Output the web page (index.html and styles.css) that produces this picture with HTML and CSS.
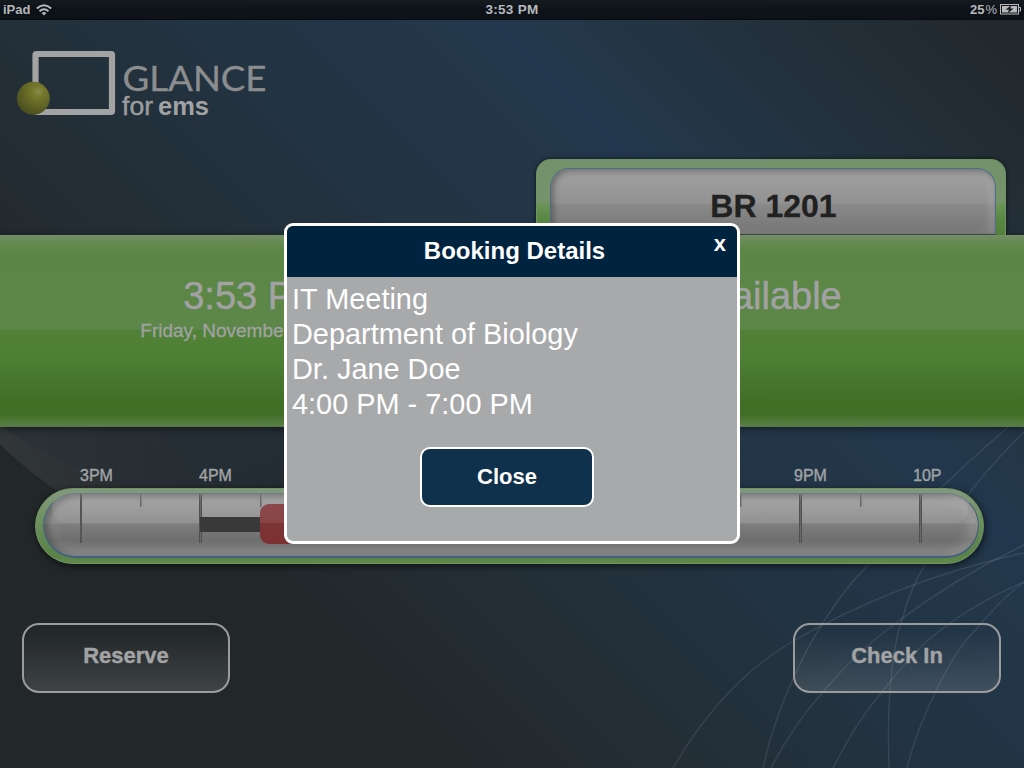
FILE: index.html
```html
<!DOCTYPE html>
<html lang="en">
<head>
<meta charset="utf-8">
<title>Glance for EMS</title>
<link rel="stylesheet" href="styles.css">
</head>
<body>
<div class="screen">
  <svg class="backdrop" viewBox="0 0 1024 768" aria-hidden="true">
    <defs>
      <linearGradient id="diagonal" gradientUnits="userSpaceOnUse" x1="0" y1="300" x2="625" y2="-325">
        <stop offset="0" stop-color="#22272a"/>
        <stop offset=".08" stop-color="#232b30"/>
        <stop offset=".24" stop-color="#23303a"/>
        <stop offset=".42" stop-color="#223444"/>
        <stop offset=".56" stop-color="#233749"/>
        <stop offset=".615" stop-color="#22374d"/>
        <stop offset=".68" stop-color="#233748"/>
        <stop offset=".83" stop-color="#23303b"/>
        <stop offset="1" stop-color="#22292e"/>
      </linearGradient>
      <linearGradient id="sweep" gradientUnits="userSpaceOnUse" x1="0" y1="0" x2="280" y2="0">
        <stop offset="0" stop-color="#fff" stop-opacity=".07"/>
        <stop offset="1" stop-color="#fff" stop-opacity="0"/>
      </linearGradient>
    </defs>
    <rect width="1024" height="768" fill="url(#diagonal)"/>
    <path d="M0 444Q30 474 60 492H300V427H0Z" fill="url(#sweep)"/>
    <path d="M3 427Q60 466 125 487H270Q290 480 300 474V427Z" fill="#23303a" opacity=".4"/>
    <g fill="none" stroke="#8e9ca8" stroke-opacity=".19" stroke-width="1.4">
      <path d="M673 768C715 696 760 660 795 640C865 600 945 570 1024 553"/>
      <path d="M763 768C772 726 784 700 794 677C804 654 812 640 823 623C840 596 850 584 868 565C900 525 940 487 1008 427"/>
      <path d="M771 768C788 735 804 713 823 692C846 664 870 642 897 622C940 590 980 566 1024 545"/>
      <path d="M833 768C850 735 863 714 882 692C905 662 925 640 950 623C974 606 998 593 1024 582"/>
      <path d="M889 768C888 730 888 710 890 692C892 663 895 640 902 620C908 597 914 582 925 565C950 512 990 465 1024 432"/>
      <path d="M907 768C915 737 924 715 935 693C948 666 960 645 978 627C993 609 1008 594 1024 582"/>
    </g>
  </svg>

  <header class="status">
    <div class="status-side">
      <span class="carrier">iPad</span>
      <svg class="wifi" width="16" height="12" viewBox="0 0 16 12"><g fill="none" stroke="#b4b8ba" stroke-width="1.9"><path d="M.8 4.5Q8-2.1 15.2 4.5"/><path d="M3.5 7.2Q8 3.1 12.5 7.2"/></g><path d="M5.6 9.1Q8 7 10.4 9.1L8 11.5Z" fill="#b4b8ba"/></svg>
    </div>
    <div class="status-time">3:53 PM</div>
    <div class="status-side status-right">
      <span class="percent">25<i>%</i></span>
      <svg width="21" height="11" viewBox="0 0 21 11"><rect x=".5" y=".5" width="18" height="9.5" fill="none" stroke="#b7b9ba"/><rect x="2" y="2" width="15" height="6.5" fill="#b7b9ba"/><path d="M19 3.5h1.5v3.5H19" fill="none" stroke="#b7b9ba"/><path d="M11.5 1L5.5 5.8H9L7.5 9.4L13.7 4.4H10.3Z" fill="#14181b"/></svg>
    </div>
  </header>

  <div class="top">
    <svg class="logo" width="256" height="72" viewBox="0 0 256 72" role="img" aria-label="Glance for ems">
      <defs><radialGradient id="ball" cx=".65" cy=".3" r=".68"><stop offset="0" stop-color="#898c4e"/><stop offset=".25" stop-color="#75782c"/><stop offset=".65" stop-color="#606524"/><stop offset="1" stop-color="#4d511f"/></radialGradient></defs>
      <rect x="19.5" y="6" width="76.5" height="58" rx="1" fill="none" stroke="#a3a3a3" stroke-width="6.2"/>
      <circle cx="17.3" cy="50.3" r="16.5" fill="url(#ball)"/>
      <text class="logo-name" x="106.5" y="43" textLength="144" lengthAdjust="spacingAndGlyphs">GLANCE</text>
      <text class="logo-for" x="106" y="67" textLength="31" lengthAdjust="spacingAndGlyphs">for</text>
      <text class="logo-ems" x="142" y="67" textLength="51" lengthAdjust="spacingAndGlyphs">ems</text>
    </svg>
    <div class="room"><div class="room-face">BR 1201</div></div>
  </div>

  <section class="banner">
    <div class="banner-col"><div class="big">3:53 PM</div><div class="date">Friday, November 18, 2011</div></div>
    <div class="banner-col state"><div class="big">Available</div></div>
  </section>

  <section class="schedule">
    <div class="hours"><span>3PM</span><span>4PM</span><span>5PM</span><span>6PM</span><span>7PM</span><span>8PM</span><span>9PM</span><span>10P</span></div>
    <div class="track">
      <div class="track-face">
        <div class="gloss"></div>
        <div class="ticks">
          <div class="tick thin"></div><div class="tick"></div><div class="tick"></div><div class="tick"></div><div class="tick"></div><div class="tick"></div><div class="tick"></div><div class="tick last"></div>
        </div>
        <div class="booking"><div class="lead"></div><div class="block"></div></div>
      </div>
    </div>
  </section>

  <nav class="actions"><button class="action">Reserve</button><button class="action">Check In</button></nav>

  <div class="dialog" role="dialog">
    <div class="dialog-head"><span>Booking Details</span><b class="dismiss">x</b></div>
    <div class="dialog-body">
      <div>IT Meeting</div><div>Department of Biology</div><div>Dr. Jane Doe</div><div>4:00 PM - 7:00 PM</div>
      <button class="close">Close</button>
    </div>
  </div>
</div>
</body>
</html>
```
FILE: styles.css
```css
* { box-sizing: border-box; }
body { margin: 0; font-family: "Liberation Sans", Arial, sans-serif; }
button { font-family: inherit; padding: 0; }

.screen { position: relative; width: 1024px; height: 768px; overflow: hidden; background: #22272b; display: flex; flex-direction: column; isolation: isolate; }
.backdrop { position: absolute; inset: 0; z-index: -1; }

.status { height: 20px; display: flex; justify-content: space-between; padding: 0 3px; background: linear-gradient(#131a20, #0c1117 60%, #0d1218); border-bottom: 1px solid #080c10; color: #b7babc; font-size: 13px; font-weight: bold; line-height: 19px; }
.status-side { width: 200px; display: flex; align-items: center; gap: 6px; }
.status-right { justify-content: flex-end; gap: 3px; }
.status-time { font-size: 13.5px; letter-spacing: .3px; }
.carrier { color: #b4b8ba; }
.percent i { font-style: normal; font-weight: normal; padding-left: 1px; }

.top { height: 215px; display: flex; justify-content: space-between; align-items: flex-start; padding: 28px 18px 0 16px; }
.logo-name { font-family: Lato, sans-serif; font-size: 34px; fill: #8b8d8f; stroke: #8b8d8f; stroke-width: .3px; }
.logo-for { font-size: 25px; fill: #9c9d9e; stroke: #9c9d9e; stroke-width: .4px; }
.logo-ems { font-size: 25px; font-weight: bold; fill: #a1a2a3; }

.room { width: 470px; height: 76px; margin-top: 111px; padding: 8px 9px 0 13px; border-radius: 15px 15px 0 0; border: 1px solid #6f9363; border-bottom: 0; background: linear-gradient(#73916a 0, #76946b 42px, #6d955a 43px, #568741 60px, #528139); box-shadow: 0 0 4px rgba(0,0,0,.65); clip-path: inset(-6px -6px 0 -6px); }
.room-face { height: 67px; border: 1px solid #4f6c88; border-bottom-color: #3e4550; border-radius: 19px 19px 0 0; background: linear-gradient(#a0a0a0, #929292 34px, #898989 36px, #757575); box-shadow: inset 2px 2px 6px rgba(0,0,0,.35), inset -5px 0 9px rgba(190,190,190,.35); color: #212121; font-size: 32px; font-weight: bold; line-height: 75px; text-align: center; padding-left: 1px; -webkit-text-stroke: .3px #212121; }

.banner { height: 192px; display: flex; padding-right: 5px; border-top: 1px solid #718f63; border-bottom: 1px solid #57754a; background: linear-gradient(#718e64 0, #65894f 8px, #5b8645 20px, #5c8748 93px, #518238 94px, #4c7e34 125px, #3f6e25 170px, #3f6e26 178px, #5a7e45 190px); color: #a2a1a4; text-align: center; box-shadow: 0 2px 8px rgba(0,0,0,.45); }
.banner-col { flex: 1; padding-top: 38px; }
.state { padding-left: 3px; }
.big { font-size: 38px; line-height: 44px; -webkit-text-stroke: .5px #a2a1a4; }
.date { font-size: 19px; line-height: 26px; -webkit-text-stroke: .3px #a2a1a4; }

.schedule { height: 137px; padding: 38px 40px 0 35px; }
.hours { display: grid; grid-template-columns: repeat(8, 119px); padding-left: 45px; height: 23px; color: #a0a2a4; font-size: 16px; line-height: 22px; -webkit-text-stroke: .4px #a0a2a4; }
.track { height: 76px; padding: 4px 4px 5px 7px; border-radius: 38px; border: 1px solid #6f9561; background: linear-gradient(#82987a 0, #82987a 5px, #6e9160 30px, #5a8148 65px, #5f8849); box-shadow: 1px 2px 6px 1px rgba(0,0,0,.5); }
.track-face { position: relative; height: 65px; overflow: hidden; border: 1px solid #416080; border-top-color: #6b7c8c; border-bottom-width: 2px; border-radius: 33px; background: linear-gradient(#979797, #8c8c8c 29px, #7e7e7e 30px, #6e6e6e 46px, #868686); box-shadow: inset 4px 1px 7px rgba(0,0,0,.4); }
.gloss { position: absolute; inset: 0 10px auto 8px; height: 29px; border-radius: 15px 20px 20px 20px; background: linear-gradient(rgba(255,255,255,.02), rgba(255,255,255,.13) 8px, rgba(255,255,255,.05)); }
.track-face::after { content: ""; position: absolute; inset: 0; border-radius: 32px; box-shadow: inset -9px 0 12px rgba(200,200,200,.25), inset 9px 0 12px rgba(180,180,180,.18); }
.ticks { position: absolute; inset: -1px auto auto 35px; display: flex; }
.tick { width: 120px; height: 50px; background: linear-gradient(#666, #666) 61px 0 / 1.5px 14px no-repeat, linear-gradient(90deg, #505050 1px, #686868 1px, #686868 2px, #505050 2px) 0 0 / 3px 50px no-repeat; }
.tick.thin { background: linear-gradient(#666, #666) 61px 0 / 1.5px 14px no-repeat, linear-gradient(#555, #555) 1px 0 / 2px 50px no-repeat; }
.tick.last { background: linear-gradient(90deg, #505050 1px, #686868 1px, #686868 2px, #505050 2px) 0 0 / 3px 50px no-repeat; }
.booking { position: absolute; inset: 10px auto auto 156px; display: flex; align-items: center; }
.lead { width: 60px; height: 15px; background: #393939; }
.block { width: 300px; height: 40px; border-radius: 9px; background: linear-gradient(#8b484a, #894345 19px, #7d3435 19px, #7b3031); }

.actions { display: flex; justify-content: space-between; padding: 59px 23px 0 22px; }
.action { width: 208px; height: 70px; border: 2px solid #9a9b9c; border-radius: 17px; background: linear-gradient(rgba(255,255,255,0) 10%, rgba(255,255,255,.13)); color: #a2a3a4; font-size: 22px; font-weight: bold; padding: 0 0 5px 0; -webkit-text-stroke: .4px #a2a3a4; }

.dialog { position: absolute; left: 284px; top: 223px; width: 456px; height: 321px; border: 3px solid #fff; border-radius: 9px; overflow: hidden; background: #a8a9ab; color: #fff; }
.dialog-head { display: grid; grid-template-columns: 1fr; height: 51px; padding-left: 5px; background: #00233f; font-size: 24px; font-weight: bold; line-height: 50px; text-align: center; }
.dismiss { position: absolute; right: 11px; top: 5px; font-size: 22px; line-height: 25px; }
.dialog-body { padding: 5px; font-size: 28.9px; line-height: 35px; }
.close { display: block; width: 174px; height: 60px; margin: 25px 0 0 128px; border: 2px solid #fff; border-radius: 10px; background: #10314b; color: #fff; font-size: 22px; font-weight: bold; }
```
